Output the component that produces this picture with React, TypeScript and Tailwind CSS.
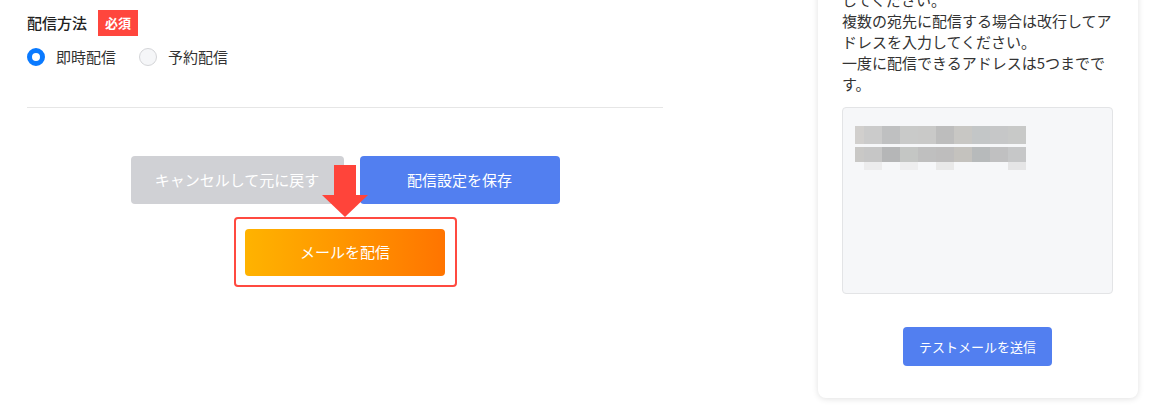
import React from "react";

const rowOne = [
  "w-[9px] bg-[#d1cfcd]",
  "w-[18px] bg-[#cbcbcb]",
  "w-[18px] bg-[#bfc0c1]",
  "w-[18px] bg-[#c9cac9]",
  "w-[18px] bg-[#c9c9c8]",
  "w-[18px] bg-[#bdbdbd]",
  "w-[18px] bg-[#c8c7c4]",
  "w-[18px] bg-[#c3c6c7]",
  "w-[18px] bg-[#c6c7c8]",
  "w-[18px] bg-[#c8c9c8]",
];

const rowTwo = [
  "w-[9px] bg-[#c9c8c6]",
  "w-[18px] bg-[#c6c6c6]",
  "w-[18px] bg-[#b5b6b7]",
  "w-[18px] bg-[#c4c6c4]",
  "w-[18px] bg-[#bfbfbf]",
  "w-[18px] bg-[#bebdbd]",
  "w-[18px] bg-[#c4c2be]",
  "w-[18px] bg-[#b7babb]",
  "w-[18px] bg-[#c0c0c1]",
  "w-[18px] bg-[#c6c7c8]",
];

const rowThree = [
  "w-[9px]",
  "w-[18px] bg-[#ececed]",
  "w-[18px]",
  "w-[18px] bg-[#eeeeef]",
  "w-[18px]",
  "w-[18px] bg-[#e9e9e9]",
  "w-[18px]",
  "w-[18px]",
  "w-[18px]",
  "w-[18px] bg-[#e5e5e6]",
];

function Radio({ label, checked }: { label: string; checked?: boolean }) {
  return (
    <label className="flex items-center gap-[11px]">
      {checked ? (
        <span className="h-[18px] w-[18px] rounded-full border-[5px] border-[#0a7aff] bg-white" />
      ) : (
        <span className="h-[18px] w-[18px] rounded-full border border-[#d4d5d8] bg-[#f5f6f8]" />
      )}
      <span>{label}</span>
    </label>
  );
}

function DownArrow() {
  return (
    <div className="absolute left-1/2 top-[-54px] flex -translate-x-1/2 flex-col items-center">
      <div className="h-[30px] w-[22px] bg-[#ff443a]" />
      <div className="h-0 w-0 border-x-[23px] border-t-[22px] border-x-transparent border-t-[#ff443a]" />
    </div>
  );
}

export default function App() {
  return (
    <div
      className="flex h-[407px] w-[1152px] overflow-hidden bg-white pl-[27px] text-[15px] text-[#333]"
      style={{ fontFamily: '"Noto Sans CJK JP", "Noto Sans", sans-serif' }}
    >
      <div className="w-[636px] pt-[10px]">
        <div className="flex h-[26px] items-center gap-[11px]">
          <span className="font-medium text-[#222]">配信方法</span>
          <span className="flex h-[26px] items-center bg-[#ff463d] px-[7px] text-[13px] font-bold text-white">
            必須
          </span>
        </div>
        <div className="mt-[12px] flex h-[18px] items-center gap-[23px]">
          <Radio label="即時配信" checked />
          <Radio label="予約配信" />
        </div>
        <div className="mt-[41px] h-px bg-[#e6e6e6]" />

        <div className="mt-[48px] flex justify-center gap-4">
          <button className="h-[48px] w-[213px] rounded bg-[#d0d1d5] text-white">
            キャンセルして元に戻す
          </button>
          <button className="h-[48px] w-[200px] rounded bg-[#527ff0] text-white">
            配信設定を保存
          </button>
        </div>

        <div className="mt-[13px] flex justify-center">
          <div className="relative flex h-[70px] w-[223px] items-center justify-center rounded border-2 border-[#ff4a40]">
            <DownArrow />
            <button className="h-[47px] w-[200px] rounded bg-gradient-to-r from-[#ffb300] to-[#ff7400] text-white">
              メールを配信
            </button>
          </div>
        </div>
      </div>

      <div className="ml-[155px] -mt-[31px] h-[429px] w-[320px] rounded-lg bg-white pl-6 pr-[25px] pt-5 shadow-[0_1px_6px_rgba(0,0,0,0.12)]">
        <p className="text-[15px] leading-[21px] text-[#333]">
          してください。
          <br />
          複数の宛先に配信する場合は改行してアドレスを入力してください。
          <br />
          一度に配信できるアドレスは5つまでです。
        </p>
        <div className="mt-[13px] h-[187px] rounded border border-[#e3e4e6] bg-[#f6f7f9] pl-[12px] pt-[18px]">
          <div className="flex h-[18px]">
            {rowOne.map((c, i) => (
              <div key={i} className={c} />
            ))}
          </div>
          <div className="mt-[3px] flex h-[15px]">
            {rowTwo.map((c, i) => (
              <div key={i} className={c} />
            ))}
          </div>
          <div className="flex h-[8px]">
            {rowThree.map((c, i) => (
              <div key={i} className={c} />
            ))}
          </div>
        </div>
        <div className="mt-[33px] flex justify-center">
          <button className="h-[39px] w-[149px] rounded bg-[#527ff0] text-[13px] text-white">
            テストメールを送信
          </button>
        </div>
      </div>
    </div>
  );
}
